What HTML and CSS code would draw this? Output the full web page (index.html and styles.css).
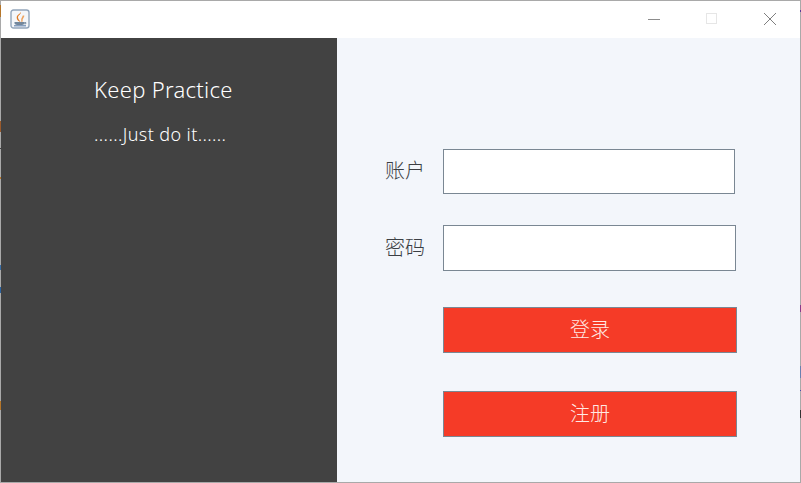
FILE: index.html
```html
<!DOCTYPE html>
<html lang="zh">
<head>
    <meta charset="UTF-8">
    <meta name="viewport" content="width=device-width, initial-scale=1.0">
    <title>Keep Practice</title>
    <link rel="stylesheet" href="styles.css">
</head>
<body>
    <div class="window">
        <div class="edge edge-left"></div>
        <div class="edge edge-right"></div>
        <div class="titlebar">
            <svg class="app-icon" width="20" height="20" viewBox="0 0 20 20">
                <rect x="1" y="1" width="18" height="18" rx="2.500" fill="#f4f6f9" stroke="#92a5ba" stroke-width="1.400"/>
                <path d="M10.500 3c1.300 2.200-2.800 3.200-2.500 5.500.2 1.800 1.500 2.500 2.500 4.500-2.500-1-4-2.500-3.800-4.800C6.900 5.800 10 5.200 10.500 3z" fill="#e07a22"/>
                <path d="M13.500 6.500c.3 2-2.800 2.600-1.500 6.300" fill="none" stroke="#eea35e" stroke-width="1.600"/>
                <path d="M4.500 13h10v1.200c0 1.300-1.800 1.800-5 1.800s-5-.5-5-1.800z" fill="#73879c"/>
                <path d="M14.500 13.500h1.300v1.300h-1.500" fill="none" stroke="#73879c"/>
                <path d="M4 16.800h12" stroke="#6a89b0" stroke-width="1.200"/>
            </svg>
            <div class="controls">
                <svg class="ctl" width="14" height="14" viewBox="0 0 14 14"><path d="M1 7.500h12" stroke="#8c8c8c"/></svg>
                <svg class="ctl" width="14" height="14" viewBox="0 0 14 14"><rect x="1.500" y="1.500" width="10" height="10" fill="none" stroke="#e6e6e6"/></svg>
                <svg class="ctl" width="14" height="14" viewBox="0 0 14 14"><path d="M1 1l12 12M13 1L1 13" stroke="#7f7f7f"/></svg>
            </div>
        </div>
        <div class="content">
            <div class="side">
                <h1 class="side-title">Keep Practice</h1>
                <p class="side-sub">......Just do it......</p>
            </div>
            <div class="main">
                <div class="row row-user">
                    <label class="field-label">账户</label>
                    <input class="field field-user" type="text">
                </div>
                <div class="row row-pass">
                    <label class="field-label">密码</label>
                    <input class="field field-pass" type="password">
                </div>
                <button class="btn btn-login">登录</button>
                <button class="btn btn-register">注册</button>
            </div>
        </div>
    </div>
</body>
</html>
```

FILE: styles.css
```css
html, body {
    margin: 0;
    padding: 0;
    height: 100%;
    overflow: hidden;
}
body {
    font-family: "Noto Sans", "Noto Sans CJK SC", sans-serif;
    background: #a9a9a9;
}
.window {
    position: relative;
    box-sizing: border-box;
    width: 801px;
    height: 483px;
    border: 1px solid #a9a9a9;
    display: flex;
    flex-direction: column;
}
/* bits of the desktop showing through at the window edge */
.edge {
    position: absolute;
    top: 0;
    width: 1px;
    height: 481px;
}
.edge-left {
    left: -1px;
    background: linear-gradient(to bottom,
        #a9a9a9 4px, #b5762a 4px, #b5762a 16px, #a9a9a9 16px,
        #a9a9a9 120px, #9a5a2c 120px, #9a5a2c 131px, #a9a9a9 131px,
        #a9a9a9 147px, #444 147px, #444 148px, #a9a9a9 148px,
        #a9a9a9 176px, #b5762a 176px, #b5762a 178px, #a9a9a9 178px,
        #a9a9a9 264px, #3a6ea5 264px, #3a6ea5 269px, #a9a9a9 269px,
        #a9a9a9 286px, #2a62a0 286px, #2a62a0 292px, #a9a9a9 292px,
        #a9a9a9 400px, #b5762a 400px, #b5762a 409px, #a9a9a9 409px);
}
.edge-right {
    right: -1px;
    background: linear-gradient(to bottom,
        #a9a9a9 9px, #5a3a9a 9px, #5a3a9a 11px, #a9a9a9 11px,
        #a9a9a9 304px, #8a3a8a 304px, #8a3a8a 311px, #a9a9a9 311px,
        #a9a9a9 365px, #6a80b0 365px, #6a80b0 377px, #a9a9a9 377px,
        #a9a9a9 389px, #4a4ab0 389px, #4a4ab0 390px, #a9a9a9 390px,
        #a9a9a9 409px, #333 409px, #333 417px, #a9a9a9 417px);
}
.titlebar {
    height: 37px;
    background: #fff;
    display: flex;
    align-items: flex-start;
    justify-content: space-between;
    flex-shrink: 0;
}
.app-icon {
    margin: 8px 0 0 9px;
}
.controls {
    display: flex;
    gap: 44px;
    padding: 11px 23px 0 0;
}
.content {
    flex: 1;
    display: flex;
}
.side {
    width: 336px;
    background: #424242;
    color: #fff;
    padding: 37px 0 0 93px;
    box-sizing: border-box;
}
.side-title {
    margin: 0;
    font-size: 22px;
    font-weight: 300;
    line-height: 29px;
    letter-spacing: 0.3px;
}
.side-sub {
    margin: 18px 0 0;
    font-size: 18px;
    font-weight: 300;
    line-height: 24px;
    letter-spacing: 0.4px;
}
.main {
    flex: 1;
    background: #f3f6fb;
    padding: 111px 0 0 48px;
    display: flex;
    flex-direction: column;
    align-items: flex-start;
}
.row {
    display: flex;
    align-items: center;
}
.row-pass {
    margin-top: 31px;
}
.field-label {
    width: 58px;
    margin-top: -4px;
    font-family: "Noto Sans CJK SC", sans-serif;
    font-size: 20px;
    font-weight: 300;
    color: #3c3f44;
}
.field {
    box-sizing: border-box;
    padding: 0;
    margin: 0;
    background: #fff;
    border: 1px solid #7a8793;
    border-radius: 0;
    outline: none;
}
.field-user {
    width: 292px;
    height: 45px;
}
.field-pass {
    width: 293px;
    height: 46px;
}
.btn {
    box-sizing: border-box;
    width: 294px;
    height: 46px;
    margin-left: 58px;
    padding: 0 0 4px;
    background: #f53b27;
    border: 1px solid #7a8793;
    color: #ffe9e4;
    font-family: "Noto Sans CJK SC", sans-serif;
    font-size: 20px;
    font-weight: 300;
}
.btn-login {
    margin-top: 36px;
}
.btn-register {
    margin-top: 38px;
}
```
